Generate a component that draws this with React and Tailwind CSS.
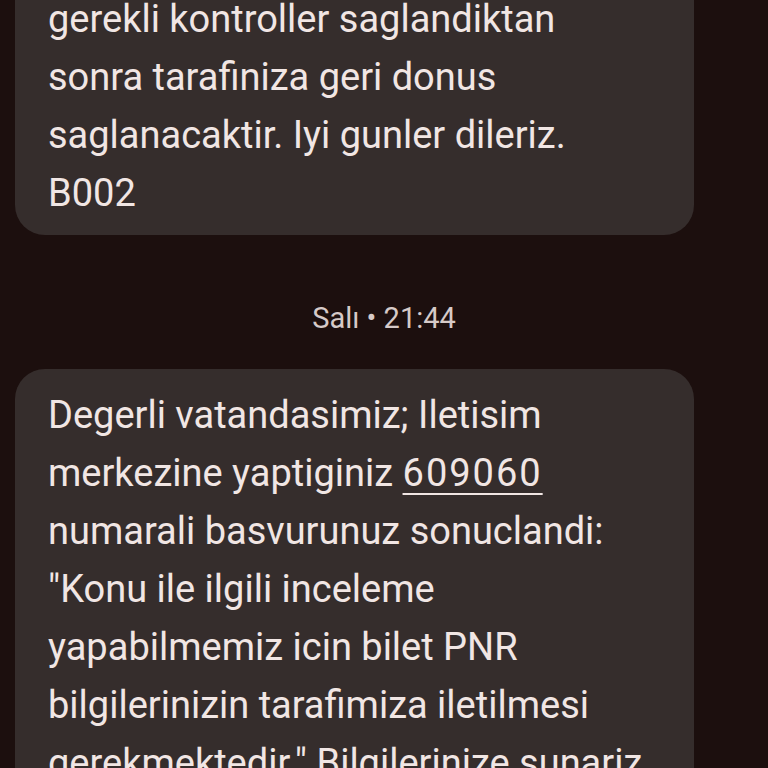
import React from "react";

const font = { fontFamily: "Roboto, 'Noto Sans', sans-serif" };

function Bubble({ children, className = "" }) {
  return (
    <div
      className={`ml-[15px] w-[679px] bg-[#352d2c] text-[#f1e6e4] text-[38px] leading-[58px] px-[33px] ${className}`}
    >
      {children}
    </div>
  );
}

export default function App() {
  return (
    <div
      className="w-[768px] h-[768px] overflow-hidden bg-[#1c0f0e]"
      style={font}
    >
      <Bubble className="rounded-b-[30px] -mt-[10px] pb-[13px]">
        <p>gerekli kontroller saglandiktan</p>
        <p>sonra tarafiniza geri donus</p>
        <p>saglanacaktir. Iyi gunler dileriz.</p>
        <p>B002</p>
      </Bubble>

      <div className="h-[134px] pt-[66px] text-center text-[#d6cac8] text-[29px] leading-[34px]">
        Salı • 21:44
      </div>

      <Bubble className="rounded-[30px] pt-[17px] pb-[20px]">
        <p>Degerli vatandasimiz; Iletisim</p>
        <p>
          merkezine yaptiginiz{" "}
          <span className="underline decoration-[2px] underline-offset-[7px] tracking-[2px]">
            609060
          </span>
        </p>
        <p>numarali basvurunuz sonuclandi:</p>
        <p>"Konu ile ilgili inceleme</p>
        <p>yapabilmemiz icin bilet PNR</p>
        <p>bilgilerinizin tarafimiza iletilmesi</p>
        <p>gerekmektedir." Bilgilerinize sunariz.</p>
      </Bubble>
    </div>
  );
}
